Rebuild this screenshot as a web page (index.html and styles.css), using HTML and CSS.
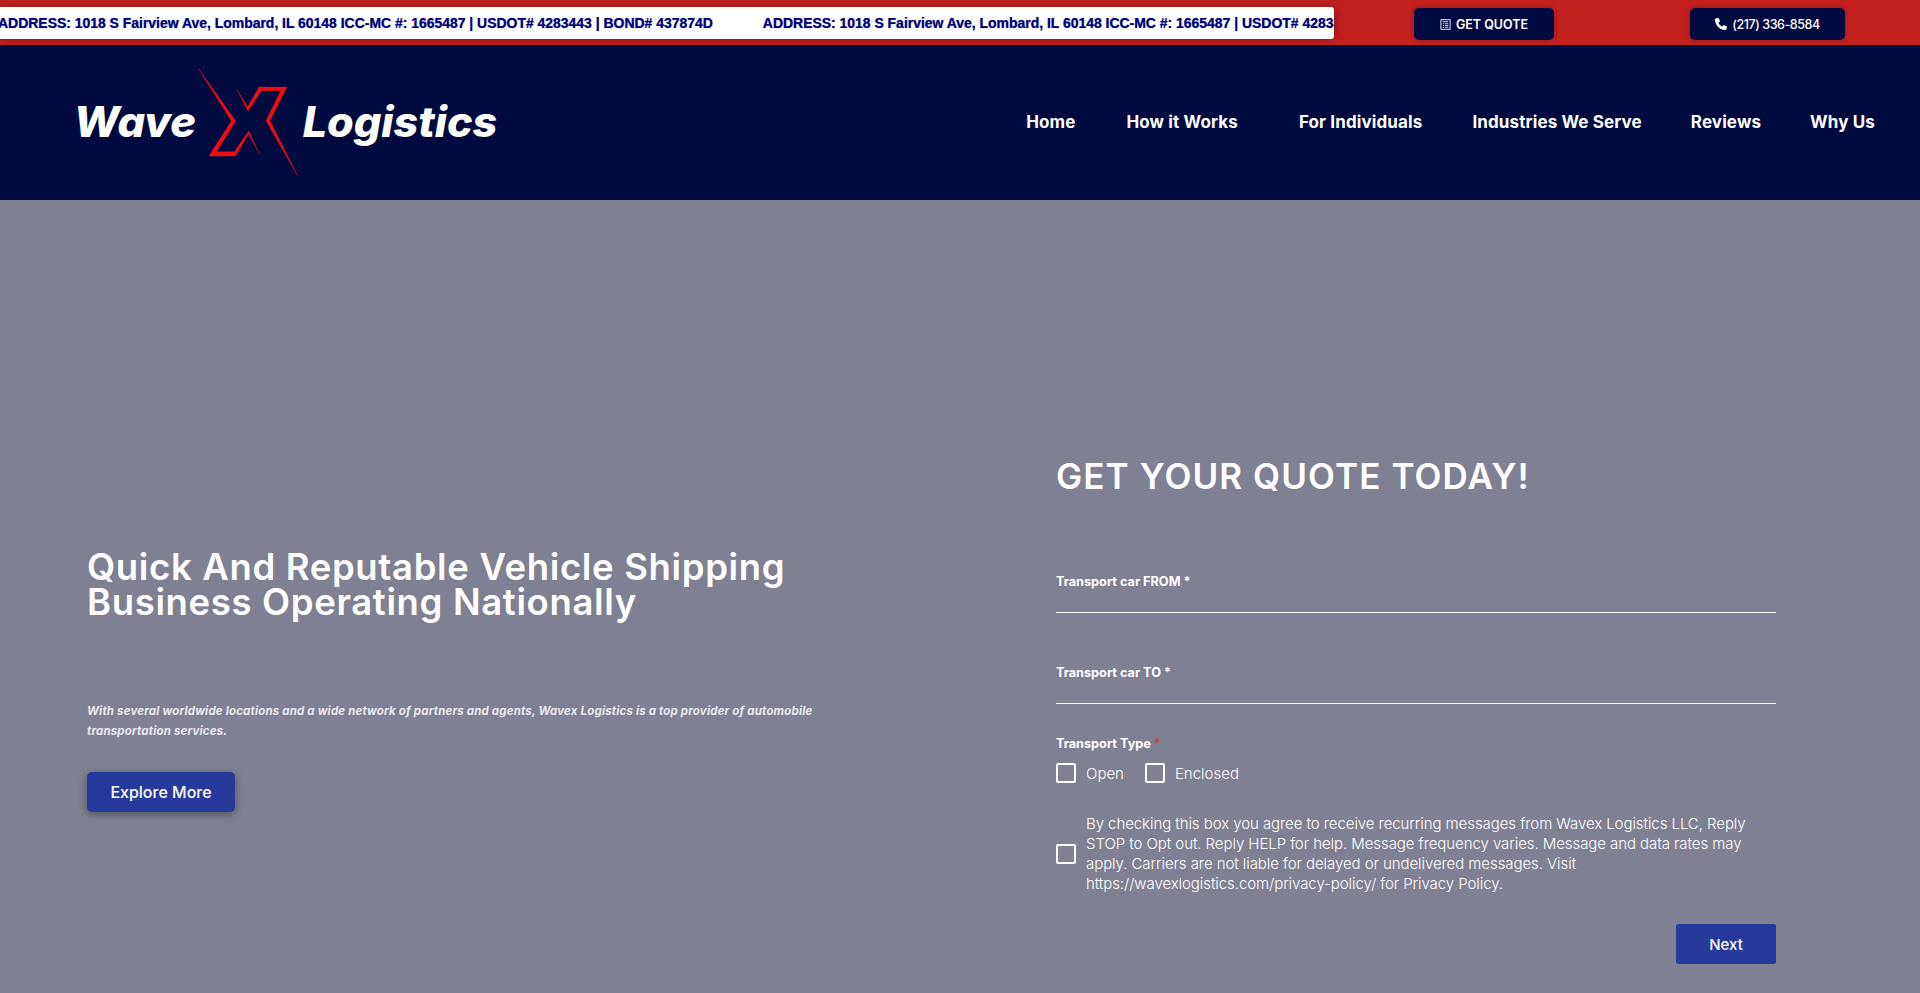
FILE: index.html
```html
<!DOCTYPE html>
<html lang="en">
<head>
<meta charset="utf-8">
<title>Wavex Logistics</title>
<link rel="stylesheet" href="styles.css">
</head>
<body>
<div class="topbar">
  <div class="ticker">
    <div class="ticker-track">
      <span class="ticker-item">ADDRESS: 1018 S Fairview Ave, Lombard, IL 60148 ICC-MC #: 1665487 | USDOT# 4283443 | BOND# 437874D</span>
      <span class="ticker-item">ADDRESS: 1018 S Fairview Ave, Lombard, IL 60148 ICC-MC #: 1665487 | USDOT# 4283443 | BOND# 437874D</span>
    </div>
  </div>
  <a class="top-btn quote-btn">
    <svg class="top-icon" viewBox="0 0 12 12" width="11" height="11"><rect x="1" y="0.8" width="10" height="10.4" fill="none" stroke="#fff" stroke-width="1"/><path d="M3 3h6M3 5.2h1.4M5.3 5.2h3.7M3 7.2h1.4M5.3 7.2h3.7M3 9h1.4M5.3 9h3.7" stroke="#fff" stroke-width=".9" fill="none"/></svg>
    GET QUOTE
  </a>
  <a class="top-btn phone-btn">
    <svg class="top-icon" viewBox="0 0 512 512" width="12" height="12"><path fill="#fff" d="M164.900 24.600c-7.700-18.600-28-28.500-47.400-23.200l-88 24C12.100 30.200 0 46 0 64C0 311.400 200.600 512 448 512c18 0 33.800-12.100 38.600-29.500l24-88c5.300-19.400-4.600-39.700-23.200-47.400l-96-40c-16.300-6.800-35.200-2.100-46.300 11.600L304.700 368C234.300 334.700 177.300 277.700 144 207.300L193.300 167c13.700-11.200 18.400-30 11.600-46.300l-40-96z"/></svg>
    (217) 336-8584
  </a>
</div>
<header class="navbar">
  <svg class="logo" viewBox="0 0 1380 420" width="460" height="140" role="img" aria-label="Wavex Logistics">
    <text class="logo-text" x="41" y="261" textLength="367" lengthAdjust="spacingAndGlyphs">Wave</text>
    <text class="logo-text" x="728" y="261" textLength="584" lengthAdjust="spacingAndGlyphs">Logistics</text>
    <path class="logo-x" d="M415 55L527 213L470 305H523L566 243L599 313L565 252L527 318H447L514 213Z"/>
    <path class="logo-x" d="M530 118L563 170L597 111H681L630 212L712 376L618 212L662 122H604L564 184Z"/>
  </svg>
  <nav class="nav">
    <a class="nav-link nl-home">Home</a>
    <a class="nav-link nl-how">How it Works</a>
    <a class="nav-link nl-ind">For Individuals</a>
    <a class="nav-link nl-serve">Industries We Serve</a>
    <a class="nav-link nl-rev">Reviews</a>
    <a class="nav-link">Why Us</a>
  </nav>
</header>
<main class="hero">
  <section class="hero-left">
    <h1 class="hero-title">Quick And Reputable Vehicle Shipping Business Operating Nationally</h1>
    <p class="hero-text">With several worldwide locations and a wide network of partners and agents, Wavex Logistics is a top provider of automobile transportation services.</p>
    <a class="explore-btn">Explore More</a>
  </section>
  <section class="hero-right">
    <h2 class="form-title">GET YOUR QUOTE TODAY!</h2>
    <div class="field field-first"><label class="field-label">Transport car FROM *</label></div>
    <div class="field"><label class="field-label">Transport car TO *</label></div>
    <div class="type-label">Transport Type <span class="req">*</span></div>
    <div class="type-row">
      <span class="check"></span><span class="check-text">Open</span>
      <span class="check check-second"></span><span class="check-text">Enclosed</span>
    </div>
    <div class="consent">
      <span class="check"></span>
      <p class="consent-text">By checking this box you agree to receive recurring messages from Wavex Logistics LLC, Reply STOP to Opt out. Reply HELP for help. Message frequency varies. Message and data rates may apply. Carriers are not liable for delayed or undelivered messages. Visit https://wavexlogistics.com/privacy-policy/ for Privacy Policy.</p>
    </div>
    <div class="next-row"><a class="next-btn">Next</a></div>
  </section>
</main>
</body>
</html>
```
FILE: styles.css
```css
* { box-sizing: border-box; }
html, body { margin: 0; padding: 0; }
body {
  width: 1920px;
  height: 993px;
  overflow: hidden;
  font-family: Inter, "Open Sans", sans-serif;
  background: #7f8091;
  color: #fff;
}
.topbar {
  height: 45px;
  background: #c32020;
  display: flex;
  align-items: flex-start;
  overflow: hidden;
}
.ticker {
  width: 1334px;
  height: 32px;
  margin-top: 7px;
  background: #fff;
  border-radius: 0 3px 3px 0;
  box-shadow: 0 0 10px rgba(0, 0, 0, .35);
  overflow: hidden;
  flex: none;
}
.ticker-track {
  display: flex;
  gap: 50px;
  margin-left: -2px;
  white-space: nowrap;
  line-height: 33px;
}
.ticker-item {
  font-family: "Liberation Sans", Arial, sans-serif;
  font-weight: 700;
  font-size: 14px;
  letter-spacing: -.03px;
  color: #00007f;
  text-shadow: 0 0 1px rgba(0, 0, 80, .6);
  flex: none;
}
.top-btn {
  height: 32px;
  margin-top: 8px;
  background: #000a3f;
  border-radius: 5px;
  box-shadow: 0 0 5px rgba(0, 0, 0, .3);
  display: flex;
  align-items: center;
  justify-content: center;
  gap: 5px;
  font-size: 12.5px;
  font-weight: 600;
  color: #fff;
  flex: none;
}
.quote-btn { width: 140px; margin-left: 80px; }
.phone-btn { width: 155px; margin-left: 136px; letter-spacing: -.45px; font-weight: 500; }
.top-icon { flex: none; }

.navbar {
  height: 155px;
  background: #000a3f;
  display: flex;
  align-items: center;
  justify-content: space-between;
  padding: 0 45px 0 60px;
}
.logo { flex: none; margin-top: -5px; }
.logo-text {
  font-family: Inter, sans-serif;
  font-weight: 800;
  font-style: italic;
  font-size: 126px;
  fill: #fff;
}
.logo-x { fill: #f00d12; stroke: #f00d12; stroke-width: 1; }
.nav { display: flex; align-items: center; margin-top: -2px; }
.nav-link {
  font-size: 17px;
  letter-spacing: .12px;
  font-weight: 700;
  color: #fff;
  white-space: nowrap;
}
.nl-home { margin-right: 51px; }
.nl-how { margin-right: 61px; }
.nl-ind { margin-right: 50px; }
.nl-serve { margin-right: 49px; }
.nl-rev { margin-right: 49px; }

.hero {
  height: 793px;
  background: #7f8091;
  display: flex;
}
.hero-left {
  width: 1056px;
  flex: none;
  padding: 350px 0 0 87px;
}
.hero-title {
  margin: 0;
  width: 740px;
  font-size: 36.5px;
  line-height: 35px;
  letter-spacing: .65px;
  font-weight: 600;
}
.hero-text {
  margin: 81px 0 0;
  width: 760px;
  font-size: 11.5px;
  line-height: 20px;
  letter-spacing: .17px;
  font-weight: 700;
  font-style: italic;
  color: #e8e8ee;
}
.explore-btn {
  display: flex;
  align-items: center;
  justify-content: center;
  width: 148px;
  height: 40px;
  margin-top: 31px;
  background: #263a9b;
  border-radius: 5px;
  box-shadow: 0 2px 8px rgba(0, 0, 0, .4);
  font-size: 16px;
  font-weight: 500;
}
.hero-right {
  width: 720px;
  flex: none;
  padding-top: 254px;
}
.form-title {
  margin: 0;
  font-size: 35px;
  line-height: 44px;
  letter-spacing: 1.1px;
  font-weight: 600;
}
.field {
  height: 91px;
  border-bottom: 1px solid #fff;
  padding-top: 50px;
}
.field-first {
  height: 115px;
  padding-top: 74px;
}
.field-label {
  display: block;
  font-size: 12.7px;
  line-height: 20px;
  font-weight: 700;
}
.type-label {
  margin-top: 30px;
  font-size: 12.7px;
  line-height: 20px;
  font-weight: 700;
}
.req { color: #e23a3a; }
.type-row {
  display: flex;
  align-items: center;
  margin-top: 9px;
}
.check {
  display: block;
  width: 20px;
  height: 20px;
  border: 2px solid #fff;
  border-radius: 2px;
  flex: none;
}
.check-text {
  margin-left: 10px;
  font-size: 15px;
  font-weight: 300;
}
.check-second { margin-left: 21px; }
.consent {
  display: flex;
  align-items: center;
  gap: 10px;
  margin-top: 31px;
}
.consent-text {
  margin: 0;
  font-size: 15px;
  letter-spacing: -.07px;
  line-height: 20px;
  font-weight: 300;
}
.next-row {
  display: flex;
  justify-content: flex-end;
  margin-top: 30px;
}
.next-btn {
  display: flex;
  align-items: center;
  justify-content: center;
  width: 100px;
  height: 40px;
  background: #263a9b;
  border-radius: 2px;
  font-size: 15px;
  font-weight: 500;
}
```
